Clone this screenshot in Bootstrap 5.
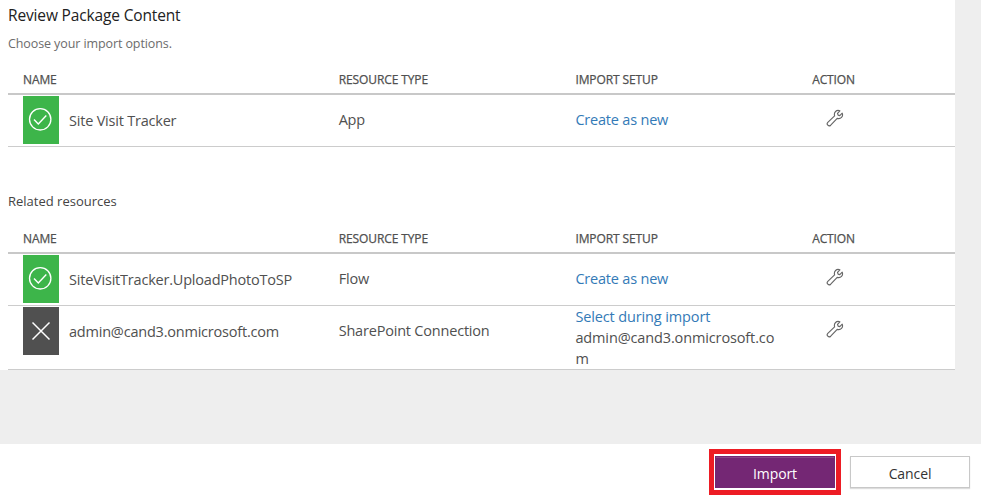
<!DOCTYPE html>
<html lang="en">
<head>
<meta charset="utf-8">
<meta name="viewport" content="width=device-width, initial-scale=1">
<title>Review Package Content</title>
<link rel="stylesheet" href="https://cdn.jsdelivr.net/npm/bootstrap@5.3.0/dist/css/bootstrap.min.css">
<style>
body{height:498px;overflow:hidden;background:#eee;color:#505050;font-family:"Open Sans","Noto Sans",sans-serif;font-size:14.5px;line-height:21px;letter-spacing:-.2px}
.review{width:955px;height:370px;padding-left:8px}
.review h1{font-size:15.5px;line-height:22px;letter-spacing:-.15px;color:#222;font-weight:400;padding-top:4px}
.hint{font-size:12.5px;line-height:18px;letter-spacing:-.1px;color:#6c6c6c;margin-top:9px}
.related{font-size:13px;line-height:18px;letter-spacing:0;color:#444;margin-top:45px}
.first-grid{padding-top:11px}
.second-grid{padding-top:13px}
.grid-head,.grid-row{--bs-gutter-x:30px;margin:0}
.grid-head{height:31px;padding-top:2px;font-size:12px;line-height:18px;letter-spacing:-.1px;-webkit-text-stroke:.25px currentColor;border-bottom:2px solid #c8c8c8}
.grid-row{height:52px;padding-top:1px;border-bottom:1px solid #ccc}
.grid-row.tall{height:64px}
.tall .setup{margin-top:-1px;letter-spacing:-.13px}
.status{width:36px;height:48px;margin-right:10px;flex:none}
.ok{background:#3db54a}
.off{background:#505050}
.cell{padding-top:13px}
.res-name{padding-top:14px;letter-spacing:-.21px}
.setup a{color:#337ab7}
.wrench{display:block;margin:0 0 0 14px}
.actions{height:54px;padding:2px 11px 0 0}
.frame{border:5px solid #ed1c24;padding:2px 1px 1px;background:#fff;width:132px;height:46px;margin-right:9px}
.actions .btn{border-radius:0;font-size:14px;letter-spacing:-.1px;line-height:20px;padding:3px 0 0}
.btn-import,.btn-import:hover{display:block;width:120px;height:32px;background:#742774;color:#fff;border:1px solid #742774;box-shadow:inset 0 1px 0 rgba(255,255,255,.15)}
.btn-cancel,.btn-cancel:hover{width:120px;height:32px;background:#fff;color:#333;border:1px solid #c8c8c8;box-shadow:0 1px 1px #ddd}
</style>
<script src="https://cdn.jsdelivr.net/npm/bootstrap@5.3.0/dist/js/bootstrap.bundle.min.js"></script>
</head>
<body class="d-flex flex-column">
<svg class="d-none">
<symbol id="check" viewBox="0 0 36 48"><circle cx="17.2" cy="23.3" r="10.7" fill="none" stroke="#fff" stroke-width="1.3"/><path d="M11 23.5l4.3 4.4 8-8.3" fill="none" stroke="#fff" stroke-width="1.4"/></symbol>
<symbol id="cross" viewBox="0 0 36 48"><path d="M9.5 15.5l17 17m0-17l-17 17" fill="none" stroke="#fff" stroke-width="1.5"/></symbol>
<symbol id="wrench" viewBox="0 0 18 18"><path d="M13.9 1.8C10.5.5 7.6 3.2 8.6 6.9L1.8 13.3c-1.8 2 .9 4.7 2.9 2.9l6.5-6.8c3.6 1 6.3-1.8 5-5.2l-2.4 2.4-1.7-.5-.6-1.8z" fill="none" stroke="#666" stroke-width="1.15" stroke-linejoin="round"/></symbol>
</svg>
<main class="review bg-white">
  <h1 class="mb-0">Review Package Content</h1>
  <p class="hint mb-0">Choose your import options.</p>
  <section class="first-grid">
    <div class="row grid-head align-items-center"><div class="col-4">NAME</div><div class="col-3">RESOURCE TYPE</div><div class="col-3">IMPORT SETUP</div><div class="col-2">ACTION</div></div>
    <div class="row grid-row">
      <div class="col-4 d-flex"><svg class="status ok"><use href="#check"/></svg><span class="res-name">Site Visit Tracker</span></div>
      <div class="col-3 cell">App</div>
      <div class="col-3 cell setup"><a href="#" class="text-decoration-none">Create as new</a></div>
      <div class="col-2 cell"><svg class="wrench" width="18" height="18"><use href="#wrench"/></svg></div>
    </div>
  </section>
  <p class="related mb-0">Related resources</p>
  <section class="second-grid">
    <div class="row grid-head align-items-center"><div class="col-4">NAME</div><div class="col-3">RESOURCE TYPE</div><div class="col-3">IMPORT SETUP</div><div class="col-2">ACTION</div></div>
    <div class="row grid-row">
      <div class="col-4 d-flex"><svg class="status ok"><use href="#check"/></svg><span class="res-name">SiteVisitTracker.UploadPhotoToSP</span></div>
      <div class="col-3 cell">Flow</div>
      <div class="col-3 cell setup"><a href="#" class="text-decoration-none">Create as new</a></div>
      <div class="col-2 cell"><svg class="wrench" width="18" height="18"><use href="#wrench"/></svg></div>
    </div>
    <div class="row grid-row tall">
      <div class="col-4 d-flex"><svg class="status off"><use href="#cross"/></svg><span class="res-name">admin@cand3.onmicrosoft.com</span></div>
      <div class="col-3 cell">SharePoint Connection</div>
      <div class="col-3 setup"><a href="#" class="text-decoration-none d-block">Select during import</a><span class="d-block text-break">admin@cand3.onmicrosoft.com</span></div>
      <div class="col-2 cell"><svg class="wrench" width="18" height="18"><use href="#wrench"/></svg></div>
    </div>
  </section>
</main>
<footer class="actions bg-white mt-auto d-flex justify-content-end align-items-center">
  <div class="frame"><button type="button" class="btn btn-import">Import</button></div>
  <button type="button" class="btn btn-cancel">Cancel</button>
</footer>
</body>
</html>
